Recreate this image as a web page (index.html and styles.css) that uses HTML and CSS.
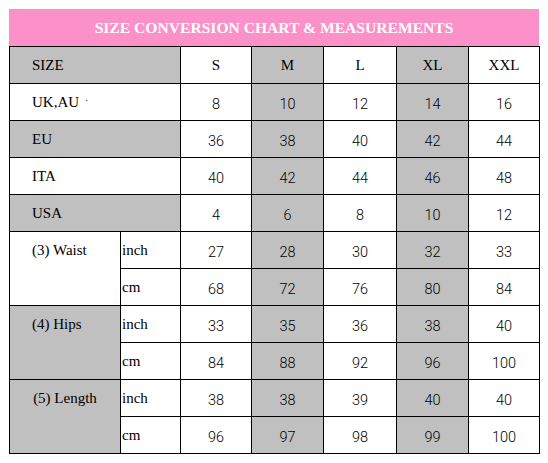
FILE: index.html
```html
<!DOCTYPE html>
<html>
<head>
<meta charset="utf-8">
<link rel="stylesheet" href="styles.css">
</head>
<body>
<div class="chart">
  <div class="title">SIZE CONVERSION CHART &amp; MEASUREMENTS</div>
  <div class="grid">
    <div class="c lbl wide g">SIZE</div>
    <div class="c hd">S</div>
    <div class="c hd g">M</div>
    <div class="c hd">L</div>
    <div class="c hd g">XL</div>
    <div class="c hd">XXL</div>

    <div class="c lbl wide">UK,AU<span class="dot">·</span></div>
    <div class="c n">8</div>
    <div class="c n g">10</div>
    <div class="c n">12</div>
    <div class="c n g">14</div>
    <div class="c n">16</div>

    <div class="c lbl wide g">EU</div>
    <div class="c n">36</div>
    <div class="c n g">38</div>
    <div class="c n">40</div>
    <div class="c n g">42</div>
    <div class="c n">44</div>

    <div class="c lbl wide">ITA</div>
    <div class="c n">40</div>
    <div class="c n g">42</div>
    <div class="c n">44</div>
    <div class="c n g">46</div>
    <div class="c n">48</div>

    <div class="c lbl wide g">USA</div>
    <div class="c n">4</div>
    <div class="c n g">6</div>
    <div class="c n">8</div>
    <div class="c n g">10</div>
    <div class="c n">12</div>

    <div class="c grp">(3) Waist</div>
    <div class="c unit">inch</div>
    <div class="c n">27</div>
    <div class="c n g">28</div>
    <div class="c n">30</div>
    <div class="c n g">32</div>
    <div class="c n">33</div>
    <div class="c unit">cm</div>
    <div class="c n">68</div>
    <div class="c n g">72</div>
    <div class="c n">76</div>
    <div class="c n g">80</div>
    <div class="c n">84</div>

    <div class="c grp g">(4) Hips</div>
    <div class="c unit">inch</div>
    <div class="c n">33</div>
    <div class="c n g">35</div>
    <div class="c n">36</div>
    <div class="c n g">38</div>
    <div class="c n">40</div>
    <div class="c unit">cm</div>
    <div class="c n">84</div>
    <div class="c n g">88</div>
    <div class="c n">92</div>
    <div class="c n g">96</div>
    <div class="c n">100</div>

    <div class="c grp center g">(5) Length</div>
    <div class="c unit">inch</div>
    <div class="c n">38</div>
    <div class="c n g">38</div>
    <div class="c n">39</div>
    <div class="c n g">40</div>
    <div class="c n">40</div>
    <div class="c unit">cm</div>
    <div class="c n">96</div>
    <div class="c n g">97</div>
    <div class="c n">98</div>
    <div class="c n g">99</div>
    <div class="c n">100</div>
  </div>
</div>
</body>
</html>
```
FILE: styles.css
```css
html, body {
  margin: 0;
  padding: 0;
  background: #ffffff;
}

.chart {
  padding: 9px 0 0 9px;
  width: 531px;
  font-family: "Liberation Serif", "Times New Roman", serif;
  font-size: 15px;
  color: #000;
}

.title {
  width: 530px;
  height: 37px;
  background: #fb91c8;
  color: #ffffff;
  font-weight: bold;
  font-size: 15.6px;
  display: flex;
  align-items: center;
  justify-content: center;
}

.grid {
  display: grid;
  grid-template-columns: 110px 59px 70px 71px 72px 71px 70px;
  grid-auto-rows: 36px;
  gap: 1px;
  padding: 1px;
  background: #000;
  width: 529px;
}

.c {
  background: #ffffff;
  display: flex;
  align-items: center;
  white-space: nowrap;
}

.g {
  background: #c0c0c0;
}

.wide {
  grid-column: span 2;
}

.lbl {
  padding-left: 22px;
}

.dot {
  font-size: 10px;
  margin-left: 6px;
  position: relative;
  top: -2px;
}

.hd {
  justify-content: center;
}

.n {
  justify-content: center;
  font-family: Roboto, "DejaVu Sans", sans-serif;
  font-weight: 300;
  font-size: 14.5px;
  font-variant-numeric: tabular-nums;
  padding-top: 4px;
}

.unit {
  padding-left: 1px;
}

.grp {
  grid-row: span 2;
  align-items: flex-start;
  line-height: 36px;
  padding-left: 22px;
}

.grp.center {
  padding-left: 0;
  justify-content: center;
}
```
